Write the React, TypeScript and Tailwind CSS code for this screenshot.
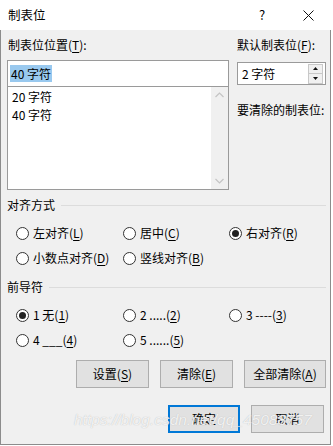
import React from 'react';

const Acc: React.FC<{ pre: string; k: string; post?: string }> = ({ pre, k, post = ')' }) => (
  <span>
    {pre}(<span className="underline underline-offset-[2px]">{k}</span>{post}
  </span>
);

const Radio: React.FC<{ checked?: boolean; children: React.ReactNode }> = ({ checked, children }) => (
  <div className="flex items-center h-[20px]">
    <span className="w-[13px] h-[13px] rounded-full border border-[#333] bg-white flex items-center justify-center shrink-0">
      {checked && <span className="w-[7px] h-[7px] rounded-full bg-[#222]" />}
    </span>
    <span className="ml-[4px] whitespace-nowrap">{children}</span>
  </div>
);

const GroupHeader: React.FC<{ title: string }> = ({ title }) => (
  <div className="flex items-center h-[16px] leading-[16px]">
    <span>{title}</span>
    <span className="flex-1 h-px bg-[#dcdcdc] ml-[6px]" />
  </div>
);

const Btn: React.FC<{ w: string; def?: boolean; children: React.ReactNode }> = ({ w, def, children }) => (
  <div
    className={
      'h-[28px] flex items-center justify-center bg-[#e1e1e1] ' +
      w +
      (def ? ' border-2 border-[#0078d7]' : ' border border-[#adadad]')
    }
  >
    {children}
  </div>
);

export default function App() {
  return (
    <div className="relative w-[331px] h-[445px] text-[12px] text-black font-['Noto_Sans_CJK_SC',sans-serif]">
      {/* title bar */}
      <div className="h-[30px] bg-white flex items-center">
        <span className="ml-[8px] text-[12.5px]">制表位</span>
        <span className="flex-1" />
        <span className="w-[46px] text-center text-[13px]">?</span>
        <span className="w-[46px] flex justify-center">
          <svg width="11" height="11" viewBox="0 0 11 11">
            <path d="M0.5 0.5 L10.5 10.5 M10.5 0.5 L0.5 10.5" stroke="#111" strokeWidth="1" />
          </svg>
        </span>
      </div>

      {/* body */}
      <div className="h-[415px] bg-[#f0f0f0] border-l border-r border-b border-[#8c8c8c] pl-[6px] pr-[4px] pt-[7px] flex flex-col">
        <div className="flex">
          <div className="w-[222px] flex flex-col">
            <div className="h-[16px] leading-[16px] ml-[1px]">
              <Acc pre="制表位位置" k="T" post="):" />
            </div>
            <div className="mt-[7px] h-[27px] bg-white border border-[#9a9a9a] flex items-center pl-[2px]">
              <span className="bg-[#99c9ef] leading-[17px] px-px">40 字符</span>
            </div>
            <div className="h-[103px] bg-white border border-[#9a9a9a] border-t-0 flex">
              <div className="flex-1 pl-[4px] leading-[18px] pt-[1px]">
                <div>20 字符</div>
                <div>40 字符</div>
              </div>
              <div className="w-[17px] bg-[#f0f0f0] flex flex-col items-center justify-between py-[5px]">
                <svg width="9" height="6" viewBox="0 0 9 6">
                  <path d="M0.5 5 L4.5 1 L8.5 5" fill="none" stroke="#c4c4c4" strokeWidth="1.2" />
                </svg>
                <svg width="9" height="6" viewBox="0 0 9 6">
                  <path d="M0.5 1 L4.5 5 L8.5 1" fill="none" stroke="#c4c4c4" strokeWidth="1.2" />
                </svg>
              </div>
            </div>
          </div>

          <div className="ml-[8px] w-[89px] flex flex-col">
            <div className="h-[16px] leading-[16px] whitespace-nowrap">
              <Acc pre="默认制表位" k="F" post="):" />
            </div>
            <div className="mt-[9px] h-[23px] bg-white border border-[#9a9a9a] flex items-center">
              <span className="ml-[4px] flex-1">2 字符</span>
              <div className="w-[15px] mr-[2px] flex flex-col">
                <div className="h-[10px] bg-[#f0f0f0] border border-[#c8c8c8] flex items-center justify-center">
                  <svg width="5" height="3" viewBox="0 0 5 3">
                    <path d="M0 3 L2.5 0 L5 3 Z" fill="#111" />
                  </svg>
                </div>
                <div className="h-[10px] bg-[#f0f0f0] border border-t-0 border-[#c8c8c8] flex items-center justify-center">
                  <svg width="5" height="3" viewBox="0 0 5 3">
                    <path d="M0 0 L2.5 3 L5 0 Z" fill="#111" />
                  </svg>
                </div>
              </div>
            </div>
            <div className="mt-[17px] h-[16px] leading-[16px] whitespace-nowrap">要清除的制表位:</div>
          </div>
        </div>

        {/* alignment */}
        <div className="mt-[7px]">
          <GroupHeader title="对齐方式" />
        </div>
        <div className="mt-[10px] pl-[9px] grid grid-cols-[107px_106px_1fr] gap-y-[5px]">
          <Radio><Acc pre="左对齐" k="L" /></Radio>
          <Radio><Acc pre="居中" k="C" /></Radio>
          <Radio checked><Acc pre="右对齐" k="R" /></Radio>
          <Radio><Acc pre="小数点对齐" k="D" /></Radio>
          <Radio><Acc pre="竖线对齐" k="B" /></Radio>
        </div>

        {/* leader */}
        <div className="mt-[11px]">
          <GroupHeader title="前导符" />
        </div>
        <div className="mt-[10px] pl-[9px] grid grid-cols-[107px_106px_1fr] gap-y-[5px]">
          <Radio checked><Acc pre="1 无" k="1" /></Radio>
          <Radio><Acc pre="2 ....." k="2" /></Radio>
          <Radio><Acc pre="3 ----" k="3" /></Radio>
          <Radio><Acc pre="4 ___" k="4" /></Radio>
          <Radio><Acc pre="5 ......" k="5" /></Radio>
        </div>

        {/* buttons */}
        <div className="mt-[10px] flex justify-end gap-[11px]">
          <Btn w="w-[73px]"><Acc pre="设置" k="S" /></Btn>
          <Btn w="w-[73px]"><Acc pre="清除" k="E" /></Btn>
          <Btn w="w-[82px]"><Acc pre="全部清除" k="A" /></Btn>
        </div>
        <div className="mt-[17px] flex justify-end gap-[11px] mr-[2px]">
          <Btn w="w-[72px]" def>确定</Btn>
          <Btn w="w-[73px]">取消</Btn>
        </div>
      </div>

      {/* watermark */}
      <div className="absolute left-[74px] top-[408px] text-[15.5px] italic text-white/80 font-['Liberation_Sans',sans-serif] [text-shadow:0_0_1px_#b0b0b0] pointer-events-none">
        https://blog.csdn.net/qq_45088757
      </div>
    </div>
  );
}
